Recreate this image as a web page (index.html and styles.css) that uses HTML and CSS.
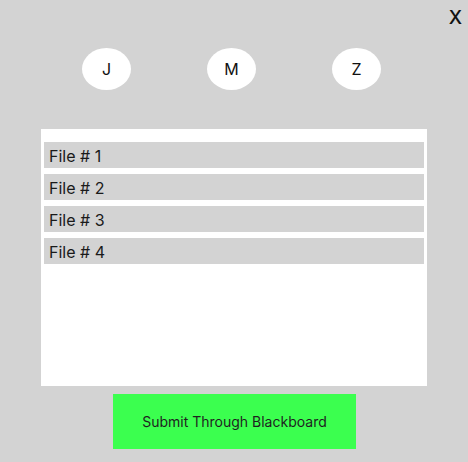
FILE: index.html
```html
<!DOCTYPE html>
<html lang="en">
<head>
    <meta charset="UTF-8">
    <meta name="viewport" content="width=device-width, initial-scale=1.0">
    <title>Submit Files</title>
    <link rel="stylesheet" href="styles.css">
</head>
<body>

<div class="modal">
    <div class="topbar">
        <span class="close-btn">X</span>
    </div>

    <!-- Group members -->
    <div class="members">
        <span class="member">J</span>
        <span class="member">M</span>
        <span class="member">Z</span>
    </div>

    <!-- File list -->
    <div class="file-panel">
        <div class="file-row">File # 1</div>
        <div class="file-row">File # 2</div>
        <div class="file-row">File # 3</div>
        <div class="file-row">File # 4</div>
    </div>

    <div class="actions">
        <button class="submit-btn">Submit Through Blackboard</button>
    </div>
</div>

</body>
</html>
```

FILE: styles.css
```css
body {
    font-family: Inter, "Noto Sans", sans-serif;
    margin: 0;
    padding: 0;
    background-color: #d3d3d3;
    color: #111;
}

.modal {
    width: 468px;
    height: 462px;
}

.topbar {
    display: flex;
    justify-content: flex-end;
    height: 40px;
    padding-top: 8px;
    padding-right: 6px;
}

.close-btn {
    font-size: 19px;
    line-height: 20px;
    font-weight: 500;
    cursor: pointer;
}

/* Member initials */
.members {
    display: flex;
    gap: 76px;
    padding-left: 82px;
}

.member {
    width: 49px;
    height: 42px;
    border-radius: 50%;
    background-color: white;
    display: flex;
    align-items: center;
    justify-content: center;
    font-size: 16px;
}

/* File list */
.file-panel {
    margin: 39px 0 0 41px;
    width: 380px;
    height: 244px;
    padding: 13px 3px 0 3px;
    background-color: white;
    display: flex;
    flex-direction: column;
    gap: 6px;
}

.file-row {
    box-sizing: border-box;
    height: 26px;
    padding: 2px 0 0 5px;
    line-height: 24px;
    background-color: #d3d3d3;
    font-size: 16px;
    color: #1a1a1a;
}

.actions {
    display: flex;
    justify-content: center;
    margin-top: 8px;
    padding-left: 1px;
}

.submit-btn {
    width: 243px;
    height: 55px;
    border: none;
    background-color: #3bff4f;
    color: #1f1f1f;
    font-family: Inter, "Noto Sans", sans-serif;
    font-size: 14px;
    cursor: pointer;
}
```
